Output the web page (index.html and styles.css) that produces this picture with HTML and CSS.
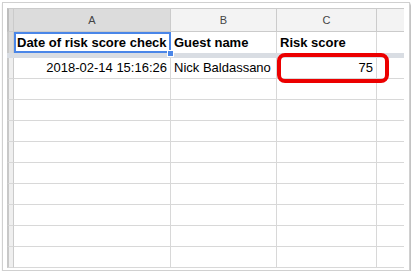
FILE: index.html
```html
<!DOCTYPE html>
<html lang="en">

<head>
    <meta charset="UTF-8">
    <meta name="viewport" content="width=device-width, initial-scale=1.0">
    <title>Risk score sheet</title>
    <link rel="stylesheet" href="styles.css">
</head>

<body>
    <div class="frame">
        <div class="sheet">
            <!-- Column headers -->
            <div class="cell col-head corner"></div>
            <div class="cell col-head active">A</div>
            <div class="cell col-head">B</div>
            <div class="cell col-head">C</div>
            <div class="cell col-head last"></div>

            <!-- Row 1 (frozen) -->
            <div class="cell row-head active first"></div>
            <div class="cell first bold selected">Date of risk score check
                <div class="sel"></div>
                <div class="handle"></div>
            </div>
            <div class="cell first bold">Guest name</div>
            <div class="cell first bold">Risk score</div>
            <div class="cell first last"></div>

            <div class="band"></div>

            <!-- Row 2 -->
            <div class="cell row-head"></div>
            <div class="cell num">2018-02-14 15:16:26</div>
            <div class="cell">Nick Baldassano</div>
            <div class="cell num">75</div>
            <div class="cell last"></div>

            <!-- Empty rows -->
            <div class="cell row-head"></div><div class="cell"></div><div class="cell"></div><div class="cell"></div><div class="cell last"></div>
            <div class="cell row-head"></div><div class="cell"></div><div class="cell"></div><div class="cell"></div><div class="cell last"></div>
            <div class="cell row-head"></div><div class="cell"></div><div class="cell"></div><div class="cell"></div><div class="cell last"></div>
            <div class="cell row-head"></div><div class="cell"></div><div class="cell"></div><div class="cell"></div><div class="cell last"></div>
            <div class="cell row-head"></div><div class="cell"></div><div class="cell"></div><div class="cell"></div><div class="cell last"></div>
            <div class="cell row-head"></div><div class="cell"></div><div class="cell"></div><div class="cell"></div><div class="cell last"></div>
            <div class="cell row-head"></div><div class="cell"></div><div class="cell"></div><div class="cell"></div><div class="cell last"></div>
            <div class="cell row-head"></div><div class="cell"></div><div class="cell"></div><div class="cell"></div><div class="cell last"></div>
            <div class="cell row-head"></div><div class="cell"></div><div class="cell"></div><div class="cell"></div><div class="cell last"></div>
        </div>

        <!-- Annotation around the risk score -->
        <div class="callout"></div>
    </div>
</body>

</html>
```

FILE: styles.css
```css
body {
    margin: 0;
    background-color: #ffffff;
    font-family: "Liberation Sans", Arial, sans-serif;
}

.frame {
    position: relative;
    margin: 2px 0 0 2px;
    width: 408px;
    box-sizing: border-box;
    border: 1px solid #d0d0d0;
    padding: 5px 5px 2px 4px;
    background: #ffffff;
    box-shadow: 1px 2px 2px rgba(0, 0, 0, 0.35);
}

.sheet {
    display: grid;
    grid-template-columns: 7px 157px 106px 100px 27px;
    grid-template-rows: 24px 21px 5px repeat(10, 21px);
}

.cell {
    position: relative;
    box-sizing: border-box;
    border-right: 1px solid #d8d8d8;
    border-bottom: 1px solid #d8d8d8;
    padding: 0 3px;
    font-size: 13px;
    line-height: 20px;
    color: #000000;
    white-space: nowrap;
}

.cell.last {
    border-right: none;
}

.cell.first {
    border-bottom: none;
    line-height: 21px;
}

.col-head {
    background: #f3f3f3;
    border-top: 1px solid #cbcbcb;
    border-bottom-color: #cbcbcb;
    border-right-color: #cbcbcb;
    text-align: center;
    font-size: 11px;
    line-height: 22px;
    color: #444444;
}

.col-head.active {
    background: #dcdcdc;
}

.col-head.corner {
    background: #dcdcdc;
    border-left: 2px solid #bdbdbd;
    padding: 0;
}

.row-head {
    background: #efefef;
    border-left: 2px solid #c8c8c8;
    border-right-color: #cbcbcb;
    padding: 0;
}

.row-head.active {
    background: #dadada;
}

.band {
    grid-column: 1 / -1;
    background: #d9dde3;
}

.bold {
    font-weight: bold;
}

.num {
    text-align: right;
}

.sel {
    position: absolute;
    left: 0;
    top: 0;
    right: -1px;
    bottom: 0;
    border: 2px solid #4a86e8;
}

.handle {
    position: absolute;
    right: -4px;
    bottom: -4px;
    width: 5px;
    height: 5px;
    background: #4a86e8;
    border: 1px solid #ffffff;
}

.callout {
    position: absolute;
    left: 274px;
    top: 50px;
    width: 112px;
    height: 30px;
    box-sizing: border-box;
    border: 4px solid #ec0000;
    border-radius: 8px;
}
```
